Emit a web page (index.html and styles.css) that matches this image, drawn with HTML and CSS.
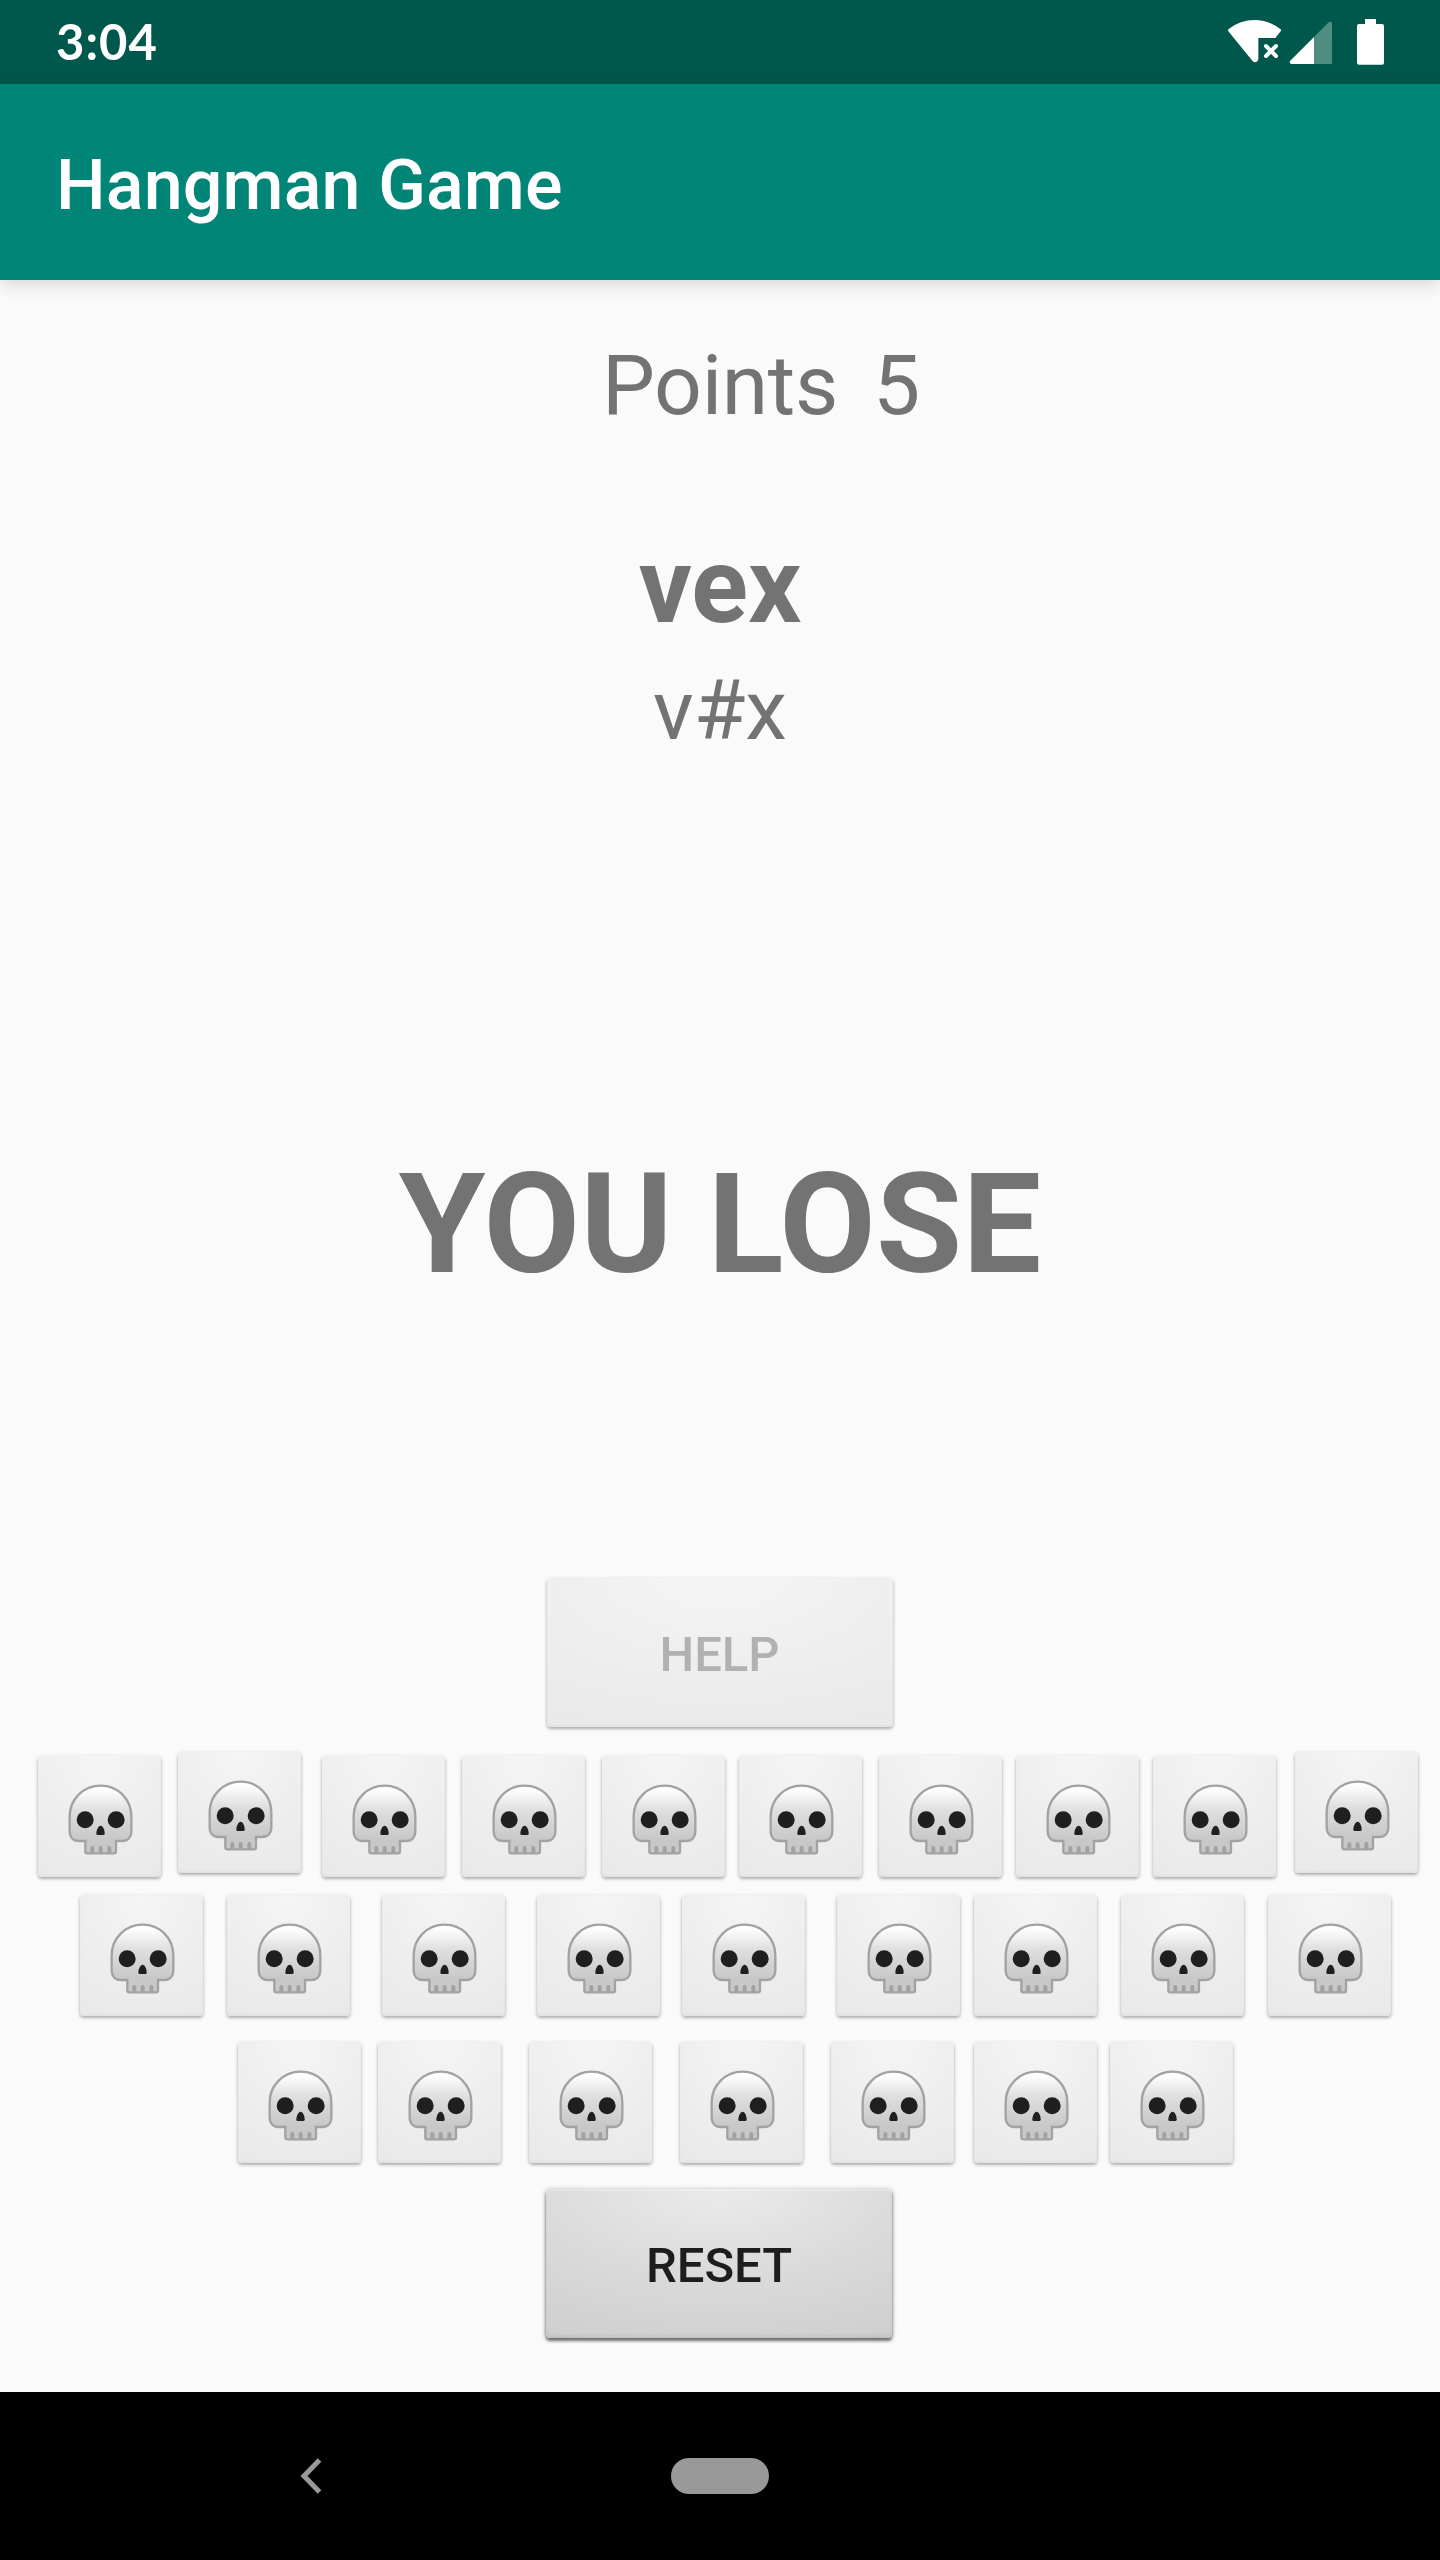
FILE: index.html
```html
<!DOCTYPE html>
<html lang="en">
<head>
<meta charset="utf-8">
<title>Hangman Game</title>
<link rel="stylesheet" href="styles.css">
</head>
<body>
<header class="status">
  <span class="clock">3:04</span>
  <svg class="status-icons" viewBox="84 54 470 144" aria-hidden="true">
    <path fill="#fff" d="M86 87Q120 60 164 60T242 88Q244 91 242 94L226 114H175V178Q173 187 164 187Q160 186 157 182L85 94Q83 90 86 87Z"/>
    <path stroke="#fff" stroke-width="12" stroke-linecap="round" d="M198 138L228 168M228 138L198 168"/>
    <path fill="#4f8d82" d="M342 111L386 67Q390 64 396 67V192H342Z"/>
    <path fill="#fff" d="M342 111V192H274Q267 189 270 183Z"/>
    <path fill="#fff" d="M495 57H528V72H546Q552 72 552 78V188Q552 194 546 194H477Q471 194 471 188V78Q471 72 477 72H495Z"/>
  </svg>
</header>
<div class="appbar"><h1>Hangman Game</h1></div>
<main class="game">
  <p class="points"><span>Points</span><span>5</span></p>
  <p class="answer">vex</p>
  <p class="guess">v#x</p>
  <p class="result">YOU LOSE</p>
  <button class="button help" disabled>HELP</button>
  <div class="row row-1">
    <button class="key" disabled><svg><use href="#skull"/></svg></button>
    <button class="key" disabled><svg><use href="#skull"/></svg></button>
    <button class="key" disabled><svg><use href="#skull"/></svg></button>
    <button class="key" disabled><svg><use href="#skull"/></svg></button>
    <button class="key" disabled><svg><use href="#skull"/></svg></button>
    <button class="key" disabled><svg><use href="#skull"/></svg></button>
    <button class="key" disabled><svg><use href="#skull"/></svg></button>
    <button class="key" disabled><svg><use href="#skull"/></svg></button>
    <button class="key" disabled><svg><use href="#skull"/></svg></button>
    <button class="key" disabled><svg><use href="#skull"/></svg></button>
  </div>
  <div class="row row-2">
    <button class="key" disabled><svg><use href="#skull"/></svg></button>
    <button class="key" disabled><svg><use href="#skull"/></svg></button>
    <button class="key" disabled><svg><use href="#skull"/></svg></button>
    <button class="key" disabled><svg><use href="#skull"/></svg></button>
    <button class="key" disabled><svg><use href="#skull"/></svg></button>
    <button class="key" disabled><svg><use href="#skull"/></svg></button>
    <button class="key" disabled><svg><use href="#skull"/></svg></button>
    <button class="key" disabled><svg><use href="#skull"/></svg></button>
    <button class="key" disabled><svg><use href="#skull"/></svg></button>
  </div>
  <div class="row row-3">
    <button class="key" disabled><svg><use href="#skull"/></svg></button>
    <button class="key" disabled><svg><use href="#skull"/></svg></button>
    <button class="key" disabled><svg><use href="#skull"/></svg></button>
    <button class="key" disabled><svg><use href="#skull"/></svg></button>
    <button class="key" disabled><svg><use href="#skull"/></svg></button>
    <button class="key" disabled><svg><use href="#skull"/></svg></button>
    <button class="key" disabled><svg><use href="#skull"/></svg></button>
  </div>
  <button class="button reset">RESET</button>
</main>
<nav class="navbar">
  <svg class="back" viewBox="0 0 22 36" aria-hidden="true"><path d="M19.5 2L4 18L19.5 34" fill="none" stroke="#999" stroke-width="5"/></svg>
  <span class="home"></span>
</nav>
<svg class="defs" aria-hidden="true">
  <defs>
    <linearGradient id="bone" x1="0" y1="0" x2="0" y2="1">
      <stop offset=".06" stop-color="#fefefe"/>
      <stop offset=".38" stop-color="#dedede"/>
      <stop offset=".8" stop-color="#c8c8c8"/>
    </linearGradient>
  </defs>
  <symbol id="skull" viewBox="146 132 195 213">
    <path fill="url(#bone)" stroke="#a2a2a2" stroke-width="7" d="M244 137C192 137 151 178 151 229V274C151 292 162 303 178 303H198V334Q198 340 204 340H284Q290 340 290 334V303H309C325 303 336 292 336 274V229C336 178 296 137 244 137Z"/>
    <path fill="#a2a2a2" d="M213 340V323Q213 318 219 318T225 323V340ZM238 340V323Q238 318 244 318T250 323V340ZM264 340V323Q264 318 270 318T276 323V340Z"/>
    <circle cx="197.500" cy="239.500" r="25.500" fill="#1f1f1f"/>
    <circle cx="290.500" cy="239.500" r="25.500" fill="#1f1f1f"/>
    <path fill="#1f1f1f" d="M244 257C251 257 256 270 256 281Q256 285 252 285H235Q231 285 231 281C231 270 237 257 244 257Z"/>
  </symbol>
</svg>
</body>
</html>
```
FILE: styles.css
```css
* { box-sizing: border-box; margin: 0; }
body {
  width: 1440px;
  height: 2560px;
  display: flex;
  flex-direction: column;
  overflow: hidden;
  background: #fafafa;
  color: #737373;
  font-family: Roboto, sans-serif;
}
.status {
  height: 84px;
  padding: 0 55px 0 56px;
  display: flex;
  justify-content: space-between;
  background: #00574b;
  color: #fff;
}
.clock {
  font: 700 49px/83px Lato, sans-serif;
  letter-spacing: 1px;
}
.status-icons { width: 156.670px; height: 48px; margin-top: 18px; }
.appbar {
  height: 196px;
  padding-left: 56px;
  background: #008577;
  box-shadow: 0 4px 16px rgba(0, 0, 0, .15);
}
.appbar h1 { color: #fff; font-size: 70px; font-weight: 500; line-height: 202px; height: 196px; letter-spacing: .13px; }
.game {
  height: 2112px;
  padding-top: 57px;
  display: flex;
  flex-direction: column;
}
.points { padding-left: 602px; display: flex; gap: 35px; font-size: 84px; line-height: 98px; letter-spacing: -.35px; }
.answer { margin-top: 90px; text-align: center; font-size: 105px; font-weight: 700; line-height: 123px; }
.guess { margin-top: 14px; text-align: center; font-size: 84px; line-height: 98px; }
.result { margin-top: 382px; text-align: center; font-size: 140px; font-weight: 700; line-height: 164px; letter-spacing: .2px; }
.button, .key {
  flex: none;
  border: 0;
  border-radius: 4px;
  background: radial-gradient(ellipse 110% 120% at 50% 0, #f5f5f5, #eee 50%, #e8e8e8);
  box-shadow: 0 2px 3px rgba(0, 0, 0, .22), 0 1px 4px rgba(0, 0, 0, .15), inset 0 -2px 2px rgba(0, 0, 0, .03);
}
.button {
  width: 346px;
  height: 149px;
  padding: 3px 0 0;
  align-self: center;
  font: 500 49px/57px Roboto, sans-serif;
}
.help { margin: 272px 1px 0 0; color: #b1b1b1; }
.reset {
  margin: 26px 2px 0 0;
  color: #1d1d1d;
  background: radial-gradient(ellipse 110% 120% at 50% 0, #ebebeb, #dadada 50%, #cdcdcd);
  box-shadow: 0 3px 3px rgba(0, 0, 0, .45), 0 1px 5px rgba(0, 0, 0, .35), inset 0 2px 1px rgba(255, 255, 255, .25), inset 0 -3px 3px rgba(0, 0, 0, .06);
}
.row { display: flex; height: 121px; }
.key { display: flex; align-items: flex-start; width: 123px; height: 121px; padding: 28px 0 0 30.330px; }
.key svg { flex: none; width: 65px; height: 71px; }

.row-1 { margin-top: 29px; padding-left: 38px; gap: 17px; }
.row-1 .key:nth-child(2), .row-1 .key:nth-child(10) { margin-top: -4px; }
.row-1 .key:nth-child(3) { margin-left: 4px; }
.row-1 .key:nth-child(6), .row-1 .key:nth-child(8), .row-1 .key:nth-child(9) { margin-left: -3px; }
.row-1 .key:nth-child(10) { margin-left: 2px; }

.row-2 { margin-top: 18px; padding-left: 80px; gap: 24px; }
.row-2 .key:nth-child(3), .row-2 .key:nth-child(4), .row-2 .key:nth-child(6) { margin-left: 8px; }
.row-2 .key:nth-child(5) { margin-left: -2px; }
.row-2 .key:nth-child(7) { margin-left: -10px; }

.row-3 { margin-top: 26px; padding-left: 238px; gap: 28px; }
.row-3 .key:nth-child(2) { margin-left: -11px; }
.row-3 .key:nth-child(6) { margin-left: -8px; }
.row-3 .key:nth-child(7) { margin-left: -15px; }

.navbar {
  height: 168px;
  padding-left: 300px;
  display: flex;
  align-items: center;
  background: #000;
}
.back { width: 22px; height: 36px; }
.home { width: 98px; height: 36px; margin-left: 349px; border-radius: 18px; background: #999; }
.defs { width: 0; height: 0; position: absolute; }
```
